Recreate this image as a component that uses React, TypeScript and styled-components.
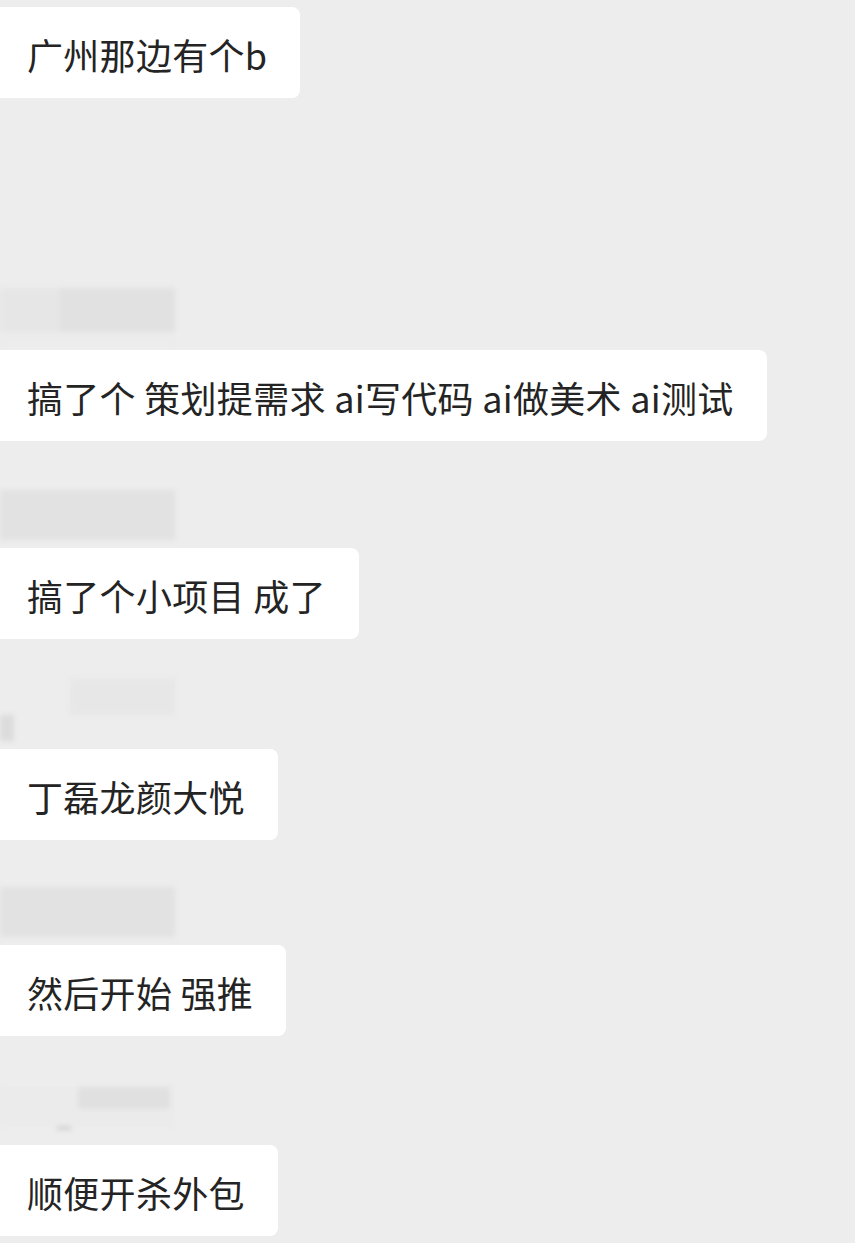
import React from "react";
import styled, { createGlobalStyle } from "styled-components";

const Global = createGlobalStyle`
  html, body {
    margin: 0;
    padding: 0;
    background: #ededed;
  }
  body {
    font-family: "Noto Sans CJK SC", "Noto Sans", sans-serif;
    overflow: hidden;
  }
`;

const Page = styled.div`
  width: 855px;
  height: 1243px;
  background: #ededed;
  display: flex;
  flex-direction: column;
  padding-top: 7px;
  box-sizing: border-box;
  overflow: hidden;
`;

const Group = styled.div<{ $mt: number }>`
  display: flex;
  flex-direction: column;
  align-items: flex-start;
  margin-top: ${(p) => p.$mt}px;
`;

const NamePlate = styled.div`
  width: 178px;
  height: 58px;
  margin-bottom: 8px;
  filter: blur(2.5px);
  display: flex;
  flex-direction: column;
  justify-content: flex-end;
`;

const NameRow = styled.div`
  display: flex;
  align-items: flex-start;
`;

const Patch = styled.div<{ $c: string; $h: number; $w: number }>`
  flex: none;
  height: ${(p) => p.$h}px;
  width: ${(p) => p.$w}px;
  background: ${(p) => p.$c};
`;

const Bubble = styled.div`
  background: #ffffff;
  border-radius: 0 8px 8px 0;
  padding: 24px 33px 21px 27px;
  font-size: 36px;
  line-height: 46px;
  color: #242424;
  white-space: nowrap;
  letter-spacing: 0.3px;
`;

type P = { w: number; h: number; c: string };
type Msg = { text: string; mt: number; name?: P[][] };

const T = "transparent";

const msgs: Msg[] = [
  { text: "广州那边有个b", mt: 0 },
  {
    text: "搞了个 策划提需求 ai写代码 ai做美术 ai测试",
    mt: 186,
    name: [
      [
        { w: 60, h: 44, c: "#e6e6e6" },
        { w: 115, h: 44, c: "#e1e1e1" },
      ],
      [{ w: 175, h: 10, c: "#ececec" }],
    ],
  },
  {
    text: "搞了个小项目 成了",
    mt: 41,
    name: [[{ w: 175, h: 50, c: "#e2e2e2" }]],
  },
  {
    text: "丁磊龙颜大悦",
    mt: 44,
    name: [
      [
        { w: 70, h: 36, c: T },
        { w: 105, h: 36, c: "#e7e7e7" },
      ],
      [{ w: 14, h: 26, c: "#dcdcdc" }],
    ],
  },
  {
    text: "然后开始 强推",
    mt: 39,
    name: [[{ w: 175, h: 50, c: "#e2e2e2" }]],
  },
  {
    text: "顺便开杀外包",
    mt: 43,
    name: [
      [
        { w: 78, h: 22, c: "#ebebeb" },
        { w: 92, h: 22, c: "#e0e0e0" },
        { w: 5, h: 22, c: "#ebebeb" },
      ],
      [{ w: 175, h: 18, c: "#ebebeb" }],
      [
        { w: 57, h: 2, c: T },
        { w: 14, h: 2, c: "#b9b9b9" },
      ],
      [{ w: 1, h: 8, c: T }],
    ],
  },
];

const Name: React.FC<{ rows: P[][] }> = ({ rows }) => (
  <NamePlate>
    {rows.map((r, i) => (
      <NameRow key={i}>
        {r.map((p, j) => (
          <Patch key={j} $w={p.w} $h={p.h} $c={p.c} />
        ))}
      </NameRow>
    ))}
  </NamePlate>
);

export default function App() {
  return (
    <>
      <Global />
      <Page>
        {msgs.map((m, i) => (
          <Group key={i} $mt={m.mt}>
            {m.name && <Name rows={m.name} />}
            <Bubble>{m.text}</Bubble>
          </Group>
        ))}
      </Page>
    </>
  );
}
